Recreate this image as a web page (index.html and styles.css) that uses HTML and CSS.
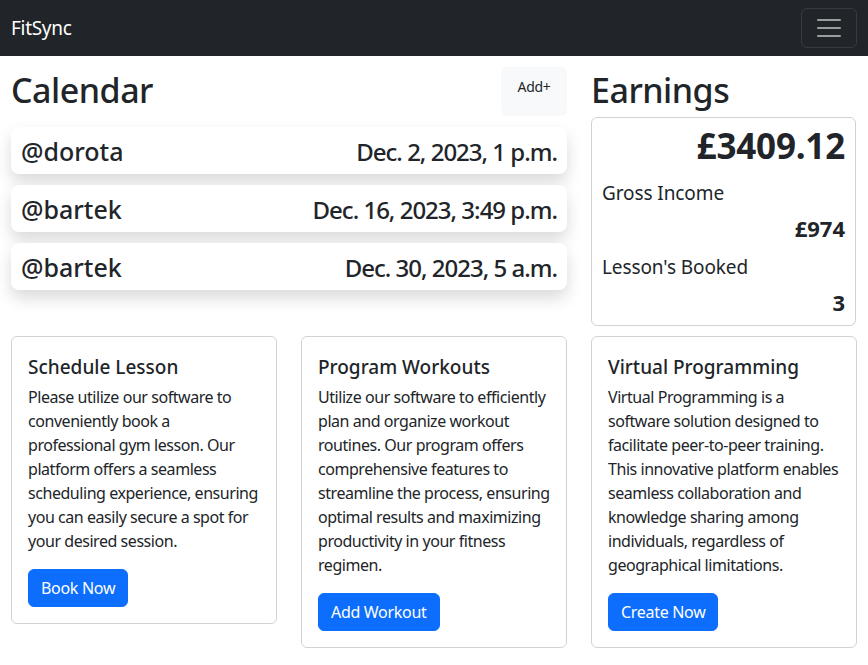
FILE: index.html
```html
<!DOCTYPE html>
<html lang="en">
<head>
<meta charset="utf-8">
<title>FitSync</title>
<link rel="stylesheet" href="styles.css">
</head>
<body>
<nav class="navbar">
  <a class="brand" href="#">FitSync</a>
  <button class="toggler" type="button" aria-label="Toggle navigation">
    <svg width="30" height="30" viewBox="0 0 30 30"><path stroke="rgba(255,255,255,0.55)" stroke-linecap="round" stroke-miterlimit="10" stroke-width="2" d="M4 7h22M4 15h22M4 23h22"/></svg>
  </button>
</nav>
<main class="page">
  <div class="top-row">
    <section class="calendar">
      <div class="cal-head">
        <h1 class="title">Calendar</h1>
        <button class="btn-add" type="button">Add+</button>
      </div>
      <div class="event"><span class="who">@dorota</span><span class="when">Dec. 2, 2023, 1 p.m.</span></div>
      <div class="event"><span class="who">@bartek</span><span class="when">Dec. 16, 2023, 3:49 p.m.</span></div>
      <div class="event"><span class="who">@bartek</span><span class="when">Dec. 30, 2023, 5 a.m.</span></div>
    </section>
    <section class="earnings">
      <h1 class="title earn-title">Earnings</h1>
      <div class="earn-card">
        <div class="total">£3409.12</div>
        <div class="label">Gross Income</div>
        <div class="value">£974</div>
        <div class="label">Lesson's Booked</div>
        <div class="value">3</div>
      </div>
    </section>
  </div>
  <div class="cards-row">
    <div class="card">
      <h5 class="card-title">Schedule Lesson</h5>
      <p class="card-text">Please utilize our software to conveniently book a professional gym lesson. Our platform offers a seamless scheduling experience, ensuring you can easily secure a spot for your desired session.</p>
      <a class="btn-primary" href="#">Book Now</a>
    </div>
    <div class="card">
      <h5 class="card-title">Program Workouts</h5>
      <p class="card-text">Utilize our software to efficiently plan and organize workout routines. Our program offers comprehensive features to streamline the process, ensuring optimal results and maximizing productivity in your fitness regimen.</p>
      <a class="btn-primary" href="#">Add Workout</a>
    </div>
    <div class="card">
      <h5 class="card-title">Virtual Programming</h5>
      <p class="card-text">Virtual Programming is a software solution designed to facilitate peer-to-peer training. This innovative platform enables seamless collaboration and knowledge sharing among individuals, regardless of geographical limitations.</p>
      <a class="btn-primary" href="#">Create Now</a>
    </div>
  </div>
</main>
</body>
</html>
```
FILE: styles.css
```css
* { box-sizing: border-box; }
html, body { margin: 0; padding: 0; }
body {
  font-family: "Noto Sans", "Open Sans", sans-serif;
  font-size: 16px;
  line-height: 1.5;
  color: #212529;
  background: #fff;
}
.navbar {
  background: #212529;
  height: 56px;
  padding: 8px 11px 8px 11px;
  display: flex;
  align-items: center;
  justify-content: space-between;
}
.brand {
  color: #fff;
  text-decoration: none;
  font-size: 19px;
  line-height: 30px;
  letter-spacing: -0.3px;
}
.toggler {
  width: 56px;
  height: 40px;
  padding: 4px 12px;
  background: transparent;
  border: 1px solid rgba(255,255,255,0.1);
  border-radius: 6px;
  display: flex;
  align-items: center;
  justify-content: center;
}
.toggler svg { display: block; }
.page { padding: 11px 12px 0 11px; }
.top-row {
  display: grid;
  grid-template-columns: 556px 265px;
  column-gap: 24px;
}
.cal-head {
  display: flex;
  justify-content: space-between;
  align-items: flex-start;
  height: 49px;
  margin-bottom: 11px;
}
.title {
  font-size: 34px;
  font-weight: 500;
  line-height: 42px;
  margin: 2px 0 0;
  letter-spacing: -0.5px;
}
.earn-title { margin-bottom: 6px; }
.btn-add {
  font-family: inherit;
  font-size: 14px;
  color: #212529;
  background: #f8f9fa;
  border: 1px solid #f8f9fa;
  border-radius: 6px;
  width: 66px;
  height: 49px;
  display: flex;
  justify-content: center;
  align-items: flex-start;
  padding: 9px 0 0;
  letter-spacing: -0.3px;
}
.event {
  display: flex;
  justify-content: space-between;
  align-items: center;
  height: 47px;
  padding: 0 10px;
  margin-bottom: 11px;
  border-radius: 8px;
  background: #fff;
  box-shadow: 0 8px 16px rgba(0,0,0,0.15);
  font-weight: 500;
}
.who { font-size: 25px; letter-spacing: 0; padding-top: 2px; }
.when { font-size: 24px; letter-spacing: -1px; padding-top: 2px; }
.earn-card {
  border: 1px solid rgba(0,0,0,0.175);
  border-radius: 6px;
  padding: 6px 10px 8px;
  height: 209px;
}
.total {
  text-align: right;
  font-size: 35px;
  font-weight: 700;
  line-height: 44px;
  letter-spacing: -0.2px;
}
.label {
  font-size: 19px;
  line-height: 28px;
  margin-top: 11px;
  letter-spacing: -0.1px;
}
.value {
  text-align: right;
  font-size: 22px;
  font-weight: 700;
  line-height: 28px;
  margin-top: 7px;
}
.cards-row {
  display: grid;
  grid-template-columns: 266px 266px 266px;
  column-gap: 24px;
  align-items: start;
  margin-top: 10px;
}
.card {
  border: 1px solid rgba(0,0,0,0.175);
  border-radius: 6px;
  padding: 16px;
}
.card-title {
  font-size: 19px;
  font-weight: 500;
  line-height: 24px;
  margin: 0 0 6px;
  padding-top: 2px;
  letter-spacing: 0;
}
.card-text {
  margin: 0 0 16px;
  font-size: 16px;
  line-height: 24px;
  letter-spacing: -0.45px;
}
.btn-primary {
  display: inline-block;
  background: #0d6efd;
  color: #fff;
  text-decoration: none;
  border: 1px solid #0d6efd;
  border-radius: 6px;
  padding: 6px 12px;
  line-height: 24px;
  font-size: 16px;
  letter-spacing: -0.3px;
}
```
